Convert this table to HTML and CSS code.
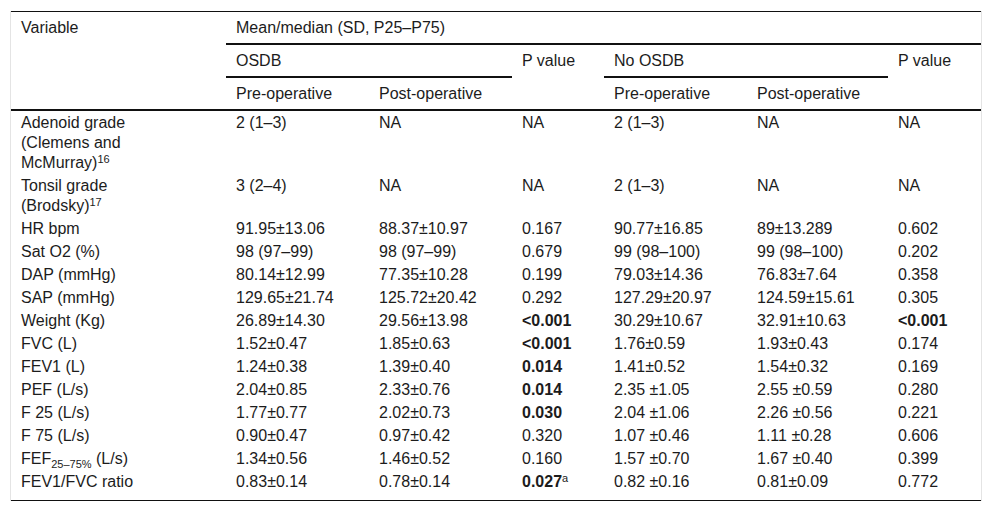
FILE: index.html
```html
<!DOCTYPE html>
<html lang="en">
<head>
<meta charset="utf-8">
<title>Table</title>
<link rel="stylesheet" href="styles.css">
</head>
<body>
<div class="frame">
<table class="data">
<colgroup>
<col class="c1"><col class="c2"><col class="c3"><col class="c4"><col class="c5"><col class="c6"><col class="c7">
</colgroup>
<thead>
<tr>
<th rowspan="3" class="var rule">Variable</th>
<th colspan="6" class="rule">Mean/median (SD, P25–P75)</th>
</tr>
<tr>
<th colspan="2" class="rule">OSDB</th>
<th rowspan="2" class="rule">P value</th>
<th colspan="2" class="rule">No OSDB</th>
<th rowspan="2" class="rule">P value</th>
</tr>
<tr>
<th class="rule">Pre-operative</th>
<th class="rule">Post-operative</th>
<th class="rule">Pre-operative</th>
<th class="rule">Post-operative</th>
</tr>
</thead>
<tbody>
<tr><td class="var">Adenoid grade (Clemens and McMurray)<sup>16</sup></td><td>2 (1–3)</td><td>NA</td><td>NA</td><td>2 (1–3)</td><td>NA</td><td>NA</td></tr>
<tr><td class="var">Tonsil grade (Brodsky)<sup>17</sup></td><td>3 (2–4)</td><td>NA</td><td>NA</td><td>2 (1–3)</td><td>NA</td><td>NA</td></tr>
<tr><td class="var">HR bpm</td><td>91.95±13.06</td><td>88.37±10.97</td><td>0.167</td><td>90.77±16.85</td><td>89±13.289</td><td>0.602</td></tr>
<tr><td class="var">Sat O2 (%)</td><td>98 (97–99)</td><td>98 (97–99)</td><td>0.679</td><td>99 (98–100)</td><td>99 (98–100)</td><td>0.202</td></tr>
<tr><td class="var">DAP (mmHg)</td><td>80.14±12.99</td><td>77.35±10.28</td><td>0.199</td><td>79.03±14.36</td><td>76.83±7.64</td><td>0.358</td></tr>
<tr><td class="var">SAP (mmHg)</td><td>129.65±21.74</td><td>125.72±20.42</td><td>0.292</td><td>127.29±20.97</td><td>124.59±15.61</td><td>0.305</td></tr>
<tr><td class="var">Weight (Kg)</td><td>26.89±14.30</td><td>29.56±13.98</td><td><b>&lt;0.001</b></td><td>30.29±10.67</td><td>32.91±10.63</td><td><b>&lt;0.001</b></td></tr>
<tr><td class="var">FVC (L)</td><td>1.52±0.47</td><td>1.85±0.63</td><td><b>&lt;0.001</b></td><td>1.76±0.59</td><td>1.93±0.43</td><td>0.174</td></tr>
<tr><td class="var">FEV1 (L)</td><td>1.24±0.38</td><td>1.39±0.40</td><td><b>0.014</b></td><td>1.41±0.52</td><td>1.54±0.32</td><td>0.169</td></tr>
<tr><td class="var">PEF (L/s)</td><td>2.04±0.85</td><td>2.33±0.76</td><td><b>0.014</b></td><td>2.35 ±1.05</td><td>2.55 ±0.59</td><td>0.280</td></tr>
<tr><td class="var">F 25 (L/s)</td><td>1.77±0.77</td><td>2.02±0.73</td><td><b>0.030</b></td><td>2.04 ±1.06</td><td>2.26 ±0.56</td><td>0.221</td></tr>
<tr><td class="var">F 75 (L/s)</td><td>0.90±0.47</td><td>0.97±0.42</td><td>0.320</td><td>1.07 ±0.46</td><td>1.11 ±0.28</td><td>0.606</td></tr>
<tr><td class="var">FEF<sub>25–75%</sub> (L/s)</td><td>1.34±0.56</td><td>1.46±0.52</td><td>0.160</td><td>1.57 ±0.70</td><td>1.67 ±0.40</td><td>0.399</td></tr>
<tr class="last"><td class="var">FEV1/FVC ratio</td><td>0.83±0.14</td><td>0.78±0.14</td><td><b>0.027</b><sup>a</sup></td><td>0.82 ±0.16</td><td>0.81±0.09</td><td>0.772</td></tr>
</tbody>
</table>
</div>
</body>
</html>
```
FILE: styles.css
```css
html, body {
  margin: 0;
  padding: 0;
  background: #ffffff;
}

body {
  font-family: "Liberation Sans", Arial, sans-serif;
  font-size: 16px;
  line-height: 20px;
  color: #1c1c1c;
}

.frame {
  margin: 11px 0 0 10px;
  width: 970px;
  border-left: 1px solid #e4e4e4;
  border-right: 1px solid #e4e4e4;
}

.data {
  width: 970px;
  table-layout: fixed;
  border-collapse: separate;
  border-spacing: 0;
  border-top: 1px solid #111;
  border-bottom: 1px solid #111;
}

.c1 { width: 215px; }
.c2 { width: 143px; }
.c3 { width: 143px; }
.c4 { width: 92px; }
.c5 { width: 143px; }
.c6 { width: 141px; }
.c7 { width: 93px; }

.data th {
  font-weight: normal;
  text-align: left;
  vertical-align: top;
  padding: 6px 10px 5px 10px;
}

.data th.rule {
  border-bottom: 2px solid #111;
}

.data td {
  text-align: left;
  vertical-align: top;
  padding: 2px 10px 1px 10px;
}

.data td.var {
  padding-right: 60px;
}

.data tr.last td {
  padding-bottom: 8px;
}

.data b {
  font-weight: bold;
}

.data sup {
  font-size: 11px;
  line-height: 0;
  vertical-align: 5px;
}

.data sub {
  font-size: 11px;
  line-height: 0;
  vertical-align: -4px;
}
```
